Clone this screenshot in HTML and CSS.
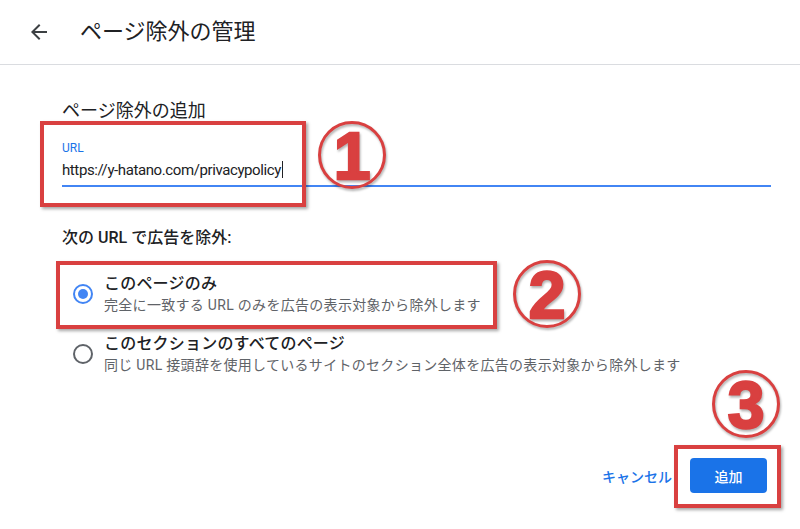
FILE: index.html
```html
<!DOCTYPE html>
<html>
<head>
    <link rel="stylesheet" href="styles.css">
</head>
<body>
    <div class="page">
        <header class="top-bar">
            <span class="back-icon">
                <svg width="24" height="24" viewBox="0 0 24 24"><path d="M20 11H7.83l5.59-5.59L12 4l-8 8 8 8 1.41-1.41L7.83 13H20v-2z" fill="#3c4043"/></svg>
            </span>
            <h1 class="page-title">ページ除外の管理</h1>
        </header>

        <main class="content">
            <h2 class="section-title">ページ除外の追加</h2>

            <div class="url-field">
                <label class="field-label">URL</label>
                <div class="field-value">https://y-hatano.com/privacypolicy<span class="caret"></span></div>
            </div>

            <p class="group-label">次の URL で広告を除外:</p>

            <div class="option option-first">
                <span class="radio radio-checked"></span>
                <div class="option-text">
                    <div class="option-title">このページのみ</div>
                    <div class="option-desc">完全に一致する URL のみを広告の表示対象から除外します</div>
                </div>
            </div>

            <div class="option">
                <span class="radio"></span>
                <div class="option-text">
                    <div class="option-title">このセクションのすべてのページ</div>
                    <div class="option-desc">同じ URL 接頭辞を使用しているサイトのセクション全体を広告の表示対象から除外します</div>
                </div>
            </div>

            <div class="actions">
                <button class="cancel-button">キャンセル</button>
                <button class="add-button">追加</button>
            </div>
        </main>

        <!-- annotations drawn over the screenshot -->
        <div class="mark-box box-1"></div>
        <div class="mark-box box-2"></div>
        <div class="mark-box box-3"></div>
        <div class="mark-num num-1"><span>1</span></div>
        <div class="mark-num num-2"><span>2</span></div>
        <div class="mark-num num-3"><span>3</span></div>
    </div>
</body>
</html>
```

FILE: styles.css
```css
body {
    margin: 0;
    background-color: #fff;
    font-family: Roboto, "Noto Sans CJK JP", sans-serif;
    color: #202124;
}
.page {
    position: relative;
    width: 800px;
    height: 529px;
    overflow: hidden;
}
.top-bar {
    display: flex;
    align-items: center;
    height: 65px;
    border-bottom: 1px solid #dadce0;
    box-sizing: border-box;
    padding-left: 27px;
}
.back-icon {
    display: flex;
    width: 24px;
    height: 24px;
}
.page-title {
    margin: 0 0 0 29px;
    font-size: 22px;
    font-weight: 400;
    line-height: 28px;
}
.content {
    padding: 0 29px 0 62px;
}
.section-title {
    margin: 34px 0 0;
    font-size: 18px;
    font-weight: 400;
    line-height: 24px;
}
.url-field {
    margin-top: 17px;
    border-bottom: 2px solid #4285f4;
    padding-bottom: 4px;
}
.field-label {
    display: block;
    font-size: 12px;
    line-height: 16px;
    color: #1a73e8;
}
.field-value {
    margin-top: 3px;
    font-size: 15px;
    letter-spacing: -0.4px;
    line-height: 22px;
    color: #202124;
}
.caret {
    display: inline-block;
    width: 1px;
    height: 17px;
    margin-left: 1px;
    background-color: #202124;
    vertical-align: -3px;
}
.group-label {
    margin: 41px 0 0;
    font-size: 16px;
    font-weight: 500;
    line-height: 20px;
}
.option {
    display: flex;
    align-items: center;
    gap: 11px;
    padding-left: 11px;
    margin-top: 18px;
}
.option-first {
    margin-top: 25px;
}
.radio {
    width: 20px;
    height: 20px;
    box-sizing: border-box;
    border: 2px solid #5f6368;
    border-radius: 50%;
    flex-shrink: 0;
    display: flex;
    align-items: center;
    justify-content: center;
}
.radio-checked {
    border-color: #4285f4;
}
.radio-checked::after {
    content: "";
    width: 10px;
    height: 10px;
    border-radius: 50%;
    background-color: #4285f4;
}
.option-title {
    font-size: 16px;
    font-weight: 500;
    letter-spacing: 0.2px;
    line-height: 22px;
}
.option-desc {
    font-size: 14px;
    letter-spacing: 0.3px;
    line-height: 20px;
    color: #5f6368;
}
.actions {
    display: flex;
    justify-content: flex-end;
    align-items: center;
    gap: 18px;
    margin-top: 83px;
    padding-right: 4px;
}
.cancel-button {
    background: none;
    border: none;
    padding: 0;
    font-family: inherit;
    font-size: 14px;
    font-weight: 500;
    color: #1a73e8;
}
.add-button {
    width: 77px;
    height: 35px;
    border: none;
    border-radius: 4px;
    background-color: #1a73e8;
    color: #fff;
    font-family: inherit;
    font-size: 14px;
    font-weight: 500;
}

/* red annotation marks */
.mark-box {
    position: absolute;
    border: 4px solid #d94040;
    box-sizing: border-box;
    box-shadow: 2px 2px 3px rgba(0, 0, 0, 0.35);
}
.box-1 {
    left: 40px;
    top: 121px;
    width: 266px;
    height: 86px;
}
.box-2 {
    left: 56px;
    top: 261px;
    width: 441px;
    height: 68px;
}
.box-3 {
    left: 674px;
    top: 445px;
    width: 107px;
    height: 63px;
}
.mark-num {
    position: absolute;
    width: 68px;
    height: 68px;
    box-sizing: border-box;
    border: 3px solid #d94040;
    border-radius: 50%;
    display: flex;
    align-items: center;
    justify-content: center;
    filter: drop-shadow(1px 2px 1px rgba(0, 0, 0, 0.3));
}
.mark-num span {
    font-family: "Liberation Sans", Arial, sans-serif;
    font-size: 66px;
    font-weight: 700;
    line-height: 1;
    color: #d94040;
    -webkit-text-stroke: 2.5px #d94040;
    margin-top: 2px;
}
.num-1 {
    left: 318px;
    top: 121px;
}
.num-2 {
    left: 513px;
    top: 260px;
}
.num-3 {
    left: 712px;
    top: 370px;
}
```
